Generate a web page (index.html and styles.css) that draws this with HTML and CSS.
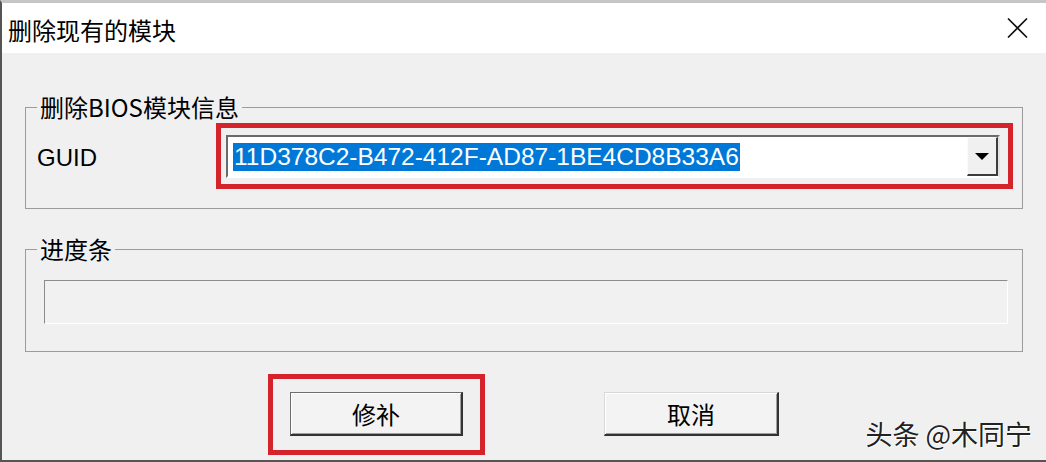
FILE: index.html
```html
<!DOCTYPE html>
<html lang="zh-CN">
<head>
<meta charset="utf-8">
<title>删除现有的模块</title>
<link rel="stylesheet" href="styles.css">
</head>
<body>
<div class="window">
  <div class="titlebar">
    <span class="title">删除现有的模块</span>
    <svg class="close" width="21" height="20" viewBox="0 0 21 20" aria-hidden="true">
      <path d="M1 0.5 L20 19.5 M20 0.5 L1 19.5" stroke="#111" stroke-width="1.6" fill="none"/>
    </svg>
  </div>
  <div class="content">
    <fieldset class="group group-info">
      <legend>删除BIOS模块信息</legend>
      <div class="row">
        <span class="guid-label">GUID</span>
        <div class="mark mark-combo">
          <div class="combo">
            <div class="combo-text"><span class="selected">11D378C2-B472-412F-AD87-1BE4CD8B33A6</span></div>
            <div class="combo-btn"><span class="arrow"></span></div>
          </div>
        </div>
      </div>
    </fieldset>
    <fieldset class="group group-progress">
      <legend>进度条</legend>
      <div class="progress"></div>
    </fieldset>
    <div class="actions">
      <div class="mark mark-btn"><button class="btn btn-default">修补</button></div>
      <button class="btn btn-cancel">取消</button>
    </div>
  </div>
  <div class="watermark">头条 @木同宁</div>
</div>
</body>
</html>
```
FILE: styles.css
```css
html, body {
  margin: 0;
  padding: 0;
}
body {
  width: 1046px;
  height: 462px;
  overflow: hidden;
  background: #f0f0f0;
  font-family: "Noto Sans CJK SC", sans-serif;
  color: #000;
}
.window {
  position: relative;
  height: 462px;
  box-sizing: border-box;
  border-top: 3px solid #c6c6c6;
  border-left: 2px solid #555;
  border-bottom: 2px solid #555;
  background: #f0f0f0;
  display: flex;
  flex-direction: column;
}
.titlebar {
  height: 50px;
  flex: none;
  background: #fff;
  display: flex;
  align-items: center;
  justify-content: space-between;
  padding: 0 18px 0 6px;
}
.title {
  font-size: 24px;
  line-height: 28px;
  margin-top: 3px;
}
.close {
  display: block;
  margin-top: -1px;
}
.content {
  flex: 1;
}
.group {
  margin: 0 23px 0 23px;
  border: 1px solid #9c9c9c;
  min-width: 0;
}
.group legend {
  padding: 0 3px;
  font-size: 24px;
  line-height: 24px;
}
.group-info {
  margin-top: 42px;
  padding: 4px 9px 19px 11px;
}
.group-progress {
  margin-top: 28px;
  padding: 19px 9px 27px 11px;
}
.row {
  display: flex;
  align-items: center;
}
.guid-label {
  width: 179px;
  flex: none;
  font-family: "Liberation Sans", Arial, sans-serif;
  font-size: 24px;
  padding-top: 3px;
}
.mark {
  border: 5px solid #d4232b;
}
.mark-combo {
  flex: 1;
  padding: 7px 8px 6px 5px;
}
.combo {
  height: 43px;
  box-sizing: border-box;
  border: 2px solid;
  border-color: #6a6a6a #e3e3e3 #fff #6a6a6a;
  background: #fff;
  display: flex;
}
.combo-text {
  flex: 1;
  display: flex;
  align-items: center;
  padding-left: 5px;
}
.selected {
  background: #0078d7;
  color: #fff;
  font-family: "Liberation Sans", Arial, sans-serif;
  font-size: 24.5px;
  line-height: 28px;
  padding: 0 1px;
}
.combo-btn {
  width: 31px;
  box-sizing: border-box;
  border-style: solid;
  border-width: 1px 2px 2px 1px;
  border-color: #fbfbfb #3c3c3c #3c3c3c #fbfbfb;
  background: #f0f0f0;
  display: flex;
  align-items: center;
  justify-content: center;
}
.arrow {
  width: 0;
  height: 0;
  border-left: 7px solid transparent;
  border-right: 7px solid transparent;
  border-top: 7px solid #000;
  margin-top: 1px;
}
.progress {
  height: 44px;
  margin: 0 5px 0 7px;
  box-sizing: border-box;
  border: 1px solid;
  border-color: #8c8c8c #fff #fff #8c8c8c;
  background: #f1f1f1;
}
.actions {
  display: flex;
  align-items: flex-start;
  margin-top: 22px;
  padding-left: 266px;
}
.mark-btn {
  padding: 13px 17px 14px 17px;
}
.btn {
  width: 173px;
  height: 44px;
  box-sizing: border-box;
  padding: 0;
  font-family: "Noto Sans CJK SC", sans-serif;
  font-size: 24px;
  color: #000;
  background: #f3f3f3;
  border-style: solid;
  border-width: 1px 2px 2px 1px;
  display: block;
}
.btn-default {
  border-color: #6d6d6d #333 #333 #6d6d6d;
  box-shadow: inset 1px 1px 0 #fff, inset -1px -1px 0 #a0a0a0;
}
.btn-cancel {
  width: 175px;
  margin-left: 119px;
  margin-top: 18px;
  border-color: #d8d8d8 #333 #333 #d8d8d8;
  box-shadow: inset 1px 1px 0 #fff, inset -1px -1px 0 #a0a0a0;
}
.watermark {
  position: absolute;
  right: 14px;
  top: 414px;
  font-size: 27px;
  line-height: 34px;
  color: #222;
  text-shadow: 1px 1px 0 #fff, -1px 0 0 #fff;
}
```
